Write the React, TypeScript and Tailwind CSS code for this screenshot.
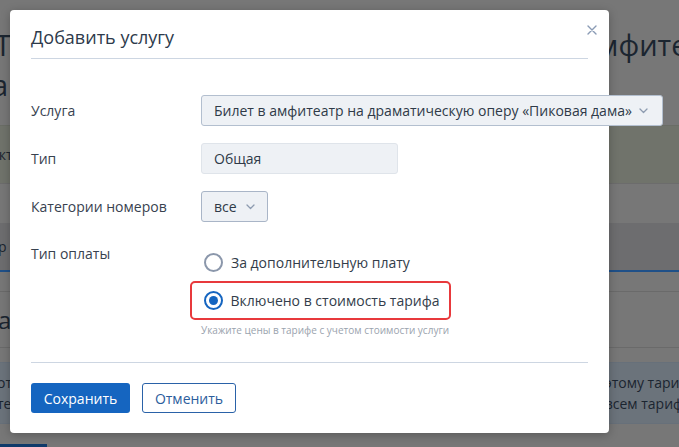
import React from 'react';

function Chevron({ className }: { className?: string }) {
  return (
    <svg width="9" height="6" viewBox="0 0 9 6" className={className} fill="none">
      <path d="M1 1l3.5 3.5L8 1" stroke="#8d9bb0" strokeWidth="1.3" strokeLinecap="round" strokeLinejoin="round" />
    </svg>
  );
}

function Radio({ checked }: { checked?: boolean }) {
  return checked ? (
    <span className="flex h-[19px] w-[19px] shrink-0 items-center justify-center rounded-full border-2 border-[#1565c0] bg-white">
      <span className="h-[9px] w-[9px] rounded-full bg-[#1565c0]" />
    </span>
  ) : (
    <span className="h-[19px] w-[19px] shrink-0 rounded-full border-2 border-[#8b97ab] bg-white" />
  );
}

export default function App() {
  return (
    <div className="relative h-[447px] w-[679px] overflow-hidden bg-[#777777] font-['Open_Sans',sans-serif]">
      {/* dimmed page behind the dialog */}
      <div className="flex flex-col text-[#1b2530]">
        <div className="h-[125px] pt-[25px] text-[29px] leading-[40px]">
          <div className="flex whitespace-nowrap">
            <span className="-ml-[5px]">Тарифы</span>
            <span className="ml-auto w-[98px] overflow-hidden">амфитеатр</span>
          </div>
          <div className="-ml-[8px] whitespace-nowrap">а</div>
        </div>
        <div className="flex h-[58px] items-center border-t border-[#6a6d66] bg-[#70736b] text-[14px]">
          <span className="-ml-[9px]">акт</span>
        </div>
        <div className="h-[40px] border-t border-[#6c6c6c]" />
        <div className="flex h-[47px] items-center bg-[#6d6d6f] text-[14px]">
          <span className="-ml-[2px]">р</span>
        </div>
        <div className="h-[2px] bg-[#1f5088]" />
        <div className="h-[20px] border-b border-[#6a6a6a]" />
        <div className="flex h-[56px] items-center border-b border-[#6a6a6a] text-[24px]">
          <span className="-ml-[2px]">ар</span>
        </div>
        <div className="h-[14px]" />
        <div className="flex h-[62px] items-center justify-between border-y border-[#67707a] bg-[#6b737b] text-[14px] leading-[21px]">
          <div className="-ml-[3px]">
            <div>от</div>
            <div>те</div>
          </div>
          <div className="w-[95px] whitespace-nowrap">
            <div>по этому тарифу</div>
            <div>по всем тарифам</div>
          </div>
        </div>
        <div className="h-[20px]" />
        <div className="h-[3px] w-[47px] bg-[#0f3a6a]" />
      </div>

      {/* dialog */}
      <div className="absolute left-[10px] top-[10px] h-[423px] w-[599px] rounded-[4px] bg-white px-[21px] shadow-[0_2px_10px_rgba(0,0,0,0.25)]">
        <button className="absolute right-[12px] top-[15px] h-[10px] w-[10px]">
          <svg width="10" height="10" viewBox="0 0 10 10" fill="none">
            <path d="M1 1l8 8M9 1L1 9" stroke="#8a9bb5" strokeWidth="1.4" strokeLinecap="round" />
          </svg>
        </button>

        <div className="border-b border-[#cdd6e2] pb-[9px] pt-[15px] text-[18px] leading-[24px] text-[#2d3a4b]">
          Добавить услугу
        </div>

        <div className="flex flex-col gap-[17px] pt-[36px] text-[14px] text-[#38424f]">
          <div className="flex h-[31px] items-center">
            <div className="w-[170px] shrink-0">Услуга</div>
            <div className="flex h-[31px] w-[462px] shrink-0 items-center gap-[7px] rounded-[3px] border border-[#b3bfcf] bg-[#eef1f5] pl-[12px] text-[#2f3a48]">
              <span className="whitespace-nowrap">Билет в амфитеатр на драматическую оперу «Пиковая дама»</span>
              <Chevron />
            </div>
          </div>

          <div className="flex h-[31px] items-center">
            <div className="w-[170px] shrink-0">Тип</div>
            <div className="flex h-[31px] w-[197px] items-center rounded-[3px] border border-[#dfe4ea] bg-[#eef1f5] pl-[12px] text-[#2f3a48]">
              Общая
            </div>
          </div>

          <div className="flex h-[31px] items-center">
            <div className="w-[170px] shrink-0">Категории номеров</div>
            <div className="flex h-[31px] w-[67px] items-center gap-[9px] rounded-[3px] border border-[#a9b5c7] bg-[#eef1f5] pl-[12px] text-[#2f3a48]">
              <span>все</span>
              <Chevron />
            </div>
          </div>

          <div className="flex items-start">
            <div className="w-[170px] shrink-0 pt-[5px] leading-[20px]">Тип оплаты</div>
            <div className="flex flex-col pt-[11px]">
              <label className="flex h-[24px] items-center gap-[8px] pl-[3px] text-[#333d4a]">
                <Radio />
                <span>За дополнительную плату</span>
              </label>
              <div className="-ml-[11px] mt-[7px] flex h-[39px] w-[261px] items-center gap-[8px] rounded-[5px] border-[2.5px] border-[#e8393c] pl-[11.5px] text-[#333d4a]">
                <Radio checked />
                <span className="whitespace-nowrap">Включено в стоимость тарифа</span>
              </div>
              <div className="mt-[3px] text-[10px] leading-[14px] text-[#9aa3ae]">
                Укажите цены в тарифе с учетом стоимости услуги
              </div>
            </div>
          </div>
        </div>

        <div className="mt-[25px] flex gap-[12px] border-t border-[#cdd6e2] pt-[20px] text-[14px]">
          <button className="h-[30px] w-[99px] rounded-[3px] bg-[#1565c0] text-white">Сохранить</button>
          <button className="h-[30px] w-[94px] rounded-[3px] border border-[#2a62a8] bg-white text-[#2c5d9c]">Отменить</button>
        </div>
      </div>
    </div>
  );
}
